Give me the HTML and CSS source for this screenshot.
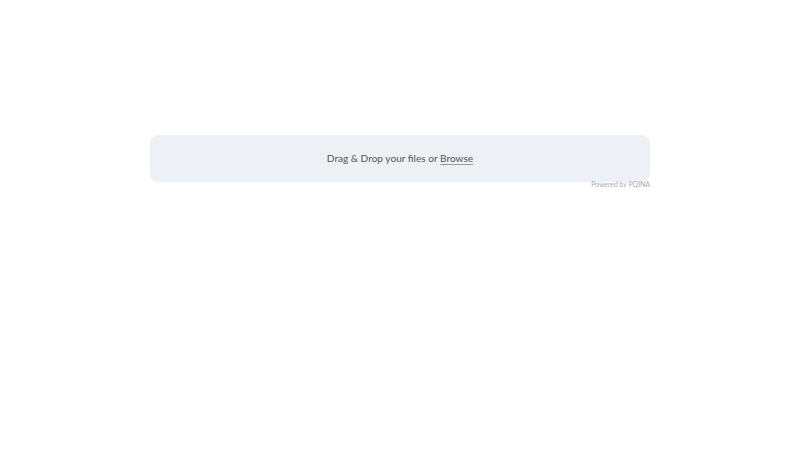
FILE: index.html
```html
<!DOCTYPE html>
<html lang="en">
<head>
    <meta charset="UTF-8">
    <title>File upload</title>
    <link rel="stylesheet" href="styles.css">
</head>
<body>
    <div class="filepond-root">
        <div class="drop-label">
            <label>Drag &amp; Drop your files or <span class="browse">Browse</span></label>
        </div>
        <a class="credits" href="#">Powered by PQINA</a>
    </div>
</body>
</html>
```

FILE: styles.css
```css
* { margin: 0; padding: 0; box-sizing: border-box; }
body { font-family: Lato, 'Open Sans', sans-serif; background: #fff; min-height: 100vh; }
.filepond-root { width: 500px; margin: 135px auto 0; }
.drop-label { height: 47px; background: #edf0f4; border-radius: 8px; display: flex; align-items: center; justify-content: center; color: #555; font-size: 10.1px; padding-bottom: 1px; }
.browse { text-decoration: underline; text-underline-offset: 2px; text-decoration-color: #999; }
.credits { display: block; text-align: right; color: #aaa; font-size: 6.9px; text-decoration: none; line-height: 5px; margin-top: 0; }
```
